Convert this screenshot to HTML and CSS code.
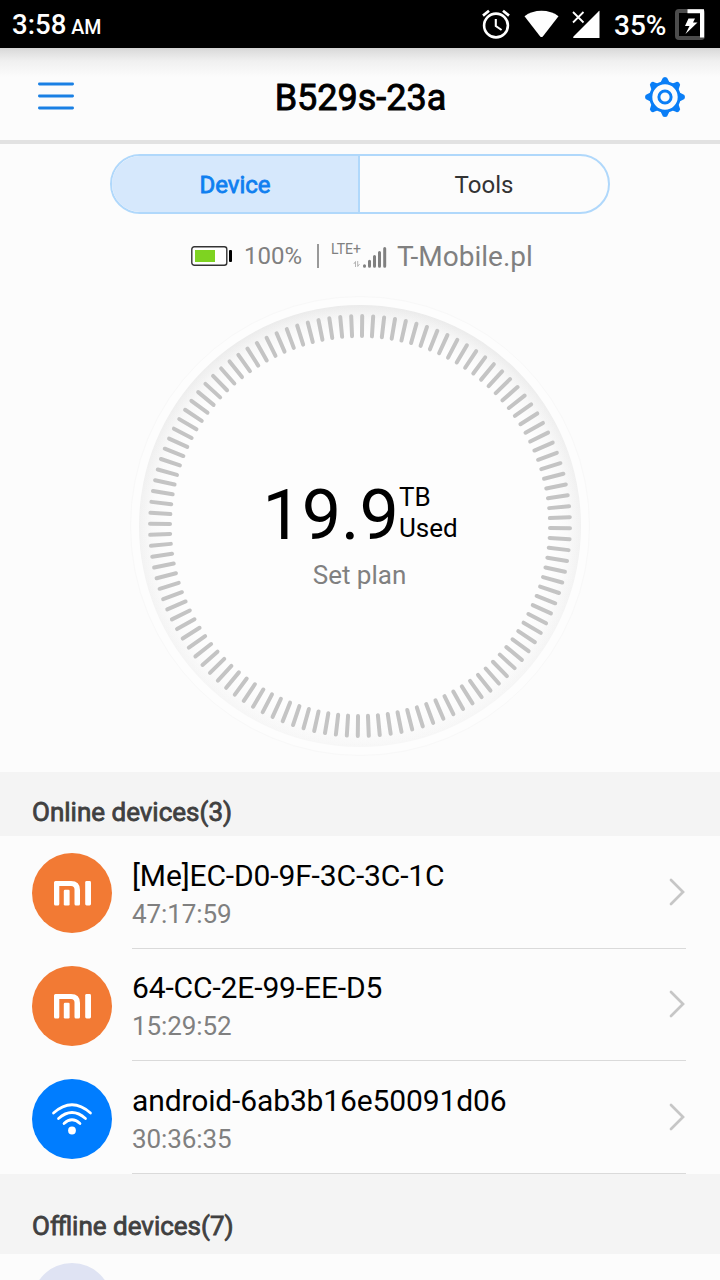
FILE: index.html
```html
<!DOCTYPE html>
<html lang="en">
<head>
<meta charset="utf-8">
<title>B529s-23a</title>
<link rel="stylesheet" href="styles.css">
</head>
<body>
<div class="screen">
  <div class="status">
    <div class="clock">3:58 <span class="ampm">AM</span></div>
    <div class="status-icons">
      <svg class="alarm" width="28" height="30" viewBox="0 0 28 30" fill="none" stroke="#fff">
        <circle cx="14" cy="16.5" r="11.9" stroke-width="2.6"/>
        <path d="M13.8 10v7l5.8 4" stroke-width="2.1"/>
        <path d="M1 6.6 7 1.7M27 6.6 21 1.7" stroke-width="2.7"/>
      </svg>
      <svg class="wifi" width="35" height="28" viewBox="0 0 35 28">
        <path d="M.5 6.2C5 2.6 11 .7 17.500.7S30 2.600 34.500 6.200L19 26.200Q17.500 28 16 26.200Z" fill="#fff"/>
      </svg>
      <svg class="cell" width="28" height="29" viewBox="0 0 28 29">
        <path d="M27.500 1V28H2Q.3 28 1.500 26.500L26 2Q27.500.4 27.500 1Z" fill="#fff"/>
        <path d="M0 0H13L14 10 6 18H0Z" fill="#000"/>
        <path d="M1 2 11.500 12.500M11.500 2 1 12.500" stroke="#fff" stroke-width="1.8"/>
      </svg>
      <span class="percent">35%</span>
      <svg class="charge" width="30" height="31" viewBox="0 0 30 31">
        <rect x="2" y="2" width="26" height="27" rx="2" fill="none" stroke="#4c4c4c" stroke-width="4"/>
        <path d="M12.500 2.300H27V28.500" fill="none" stroke="#fff" stroke-width="4"/>
        <path d="M13.500 9.500H20L18 13.500H22.500L10.500 25 14.500 17H10Z" fill="#fff"/>
      </svg>
    </div>
  </div>

  <header class="header">
    <svg class="menu" width="36" height="28" viewBox="0 0 36 28" stroke="#1a80e4" stroke-width="2.800" stroke-linecap="round">
      <path d="M1.400 2H34.600M1.400 14H34.600M1.400 26H34.600"/>
    </svg>
    <h1 class="title">B529s-23a</h1>
    <svg class="gear" width="40" height="40" viewBox="-20 -20 40 40">
      <g id="teeth" fill="#0a7ef6">
        <path id="tooth" d="M-5-13.500-3-17.500Q-2.600-20 0-20T3-17.500L5-13.500Z"/>
        <use href="#tooth" transform="rotate(45)"/>
        <use href="#tooth" transform="rotate(90)"/>
        <use href="#tooth" transform="rotate(135)"/>
        <use href="#tooth" transform="rotate(180)"/>
        <use href="#tooth" transform="rotate(225)"/>
        <use href="#tooth" transform="rotate(270)"/>
        <use href="#tooth" transform="rotate(315)"/>
      </g>
      <circle r="14.200" fill="#fcfcfc" stroke="#0a7ef6" stroke-width="3"/>
      <circle r="6.100" fill="none" stroke="#0a7ef6" stroke-width="3"/>
    </svg>
  </header>

  <main class="overview">
    <nav class="tabs">
      <div class="tab tab-active"><span class="device-label">Device</span></div>
      <div class="tab"><span class="tools-label">Tools</span></div>
    </nav>
    <div class="network">
      <svg class="battery" width="41" height="20" viewBox="0 0 41 20">
        <rect x=".8" y=".8" width="35" height="18.400" rx="2.500" fill="#fff" stroke="#333" stroke-width="1.400"/>
        <rect x="4" y="4" width="20" height="12" fill="#7ed321"/>
        <rect x="38" y="4" width="3" height="12" rx="1" fill="#000"/>
      </svg>
      <span class="level">100%</span>
      <span class="bar"></span>
      <div class="signal">
        <span class="lte">LTE+</span>
        <svg class="bars" width="34" height="21" viewBox="0 0 34 21">
          <path d="M2.500 20V14.500L.8 17M4.700 14V19.500L6.500 17" fill="none" stroke="#b5b5b5" stroke-width="1"/>
          <path d="M11.500 19.300V18.700M16.500 19.300V14.200M21.500 19.300V9.500M26.500 19.300V5.500M31.700 19.300V1.600" stroke="#808080" stroke-width="3" stroke-linecap="round"/>
        </svg>
      </div>
      <span class="carrier">T-Mobile.pl</span>
    </div>
    <div class="dial">
      <svg class="dial-face" width="462" height="462" viewBox="-231 -231 462 462">
        <defs>
          <linearGradient id="rim" x1="0" y1="0" x2="0" y2="1">
            <stop offset="0" stop-color="#ebebeb"/>
            <stop offset=".5" stop-color="#f2f2f2"/>
            <stop offset="1" stop-color="#f7f7f7"/>
          </linearGradient>
          <radialGradient id="face">
            <stop offset=".88" stop-color="#fdfdfd"/>
            <stop offset=".94" stop-color="#fdfdfd" stop-opacity=".7"/>
            <stop offset="1" stop-color="#fdfdfd" stop-opacity="0"/>
          </radialGradient>
        </defs>
        <circle r="229.500" fill="#fdfdfd" stroke="#f8f8f8"/>
        <circle r="221" fill="url(#rim)"/>
        <circle r="221" fill="url(#face)"/>
        <g id="ticks" stroke="#c4c4c4" stroke-width="4" stroke-linecap="round"></g>
      </svg>
      <div class="reading">
        <div class="usage">
          <span class="amount">19.9</span>
          <div class="unit"><span class="tb">TB</span><span class="used">Used</span></div>
        </div>
        <span class="plan">Set plan</span>
      </div>
    </div>
  </main>

  <h2 class="section online"><span>Online devices(3)</span></h2>
  <div class="device">
    <svg class="avatar" width="80" height="80" viewBox="0 0 80 80">
      <circle cx="40" cy="40" r="40" fill="#f27a34"/>
      <g id="mi" fill="#fff">
        <path d="M22 29.500Q22 28 23.500 28H39Q48 28 48 37V51Q48 52.500 46.500 52.500H44Q42.500 52.500 42.500 51V36.500Q42.500 33 39 33H27.300V51Q27.300 52.500 25.800 52.500H23.500Q22 52.500 22 51Z"/>
        <rect x="31.800" y="36.800" width="5.800" height="15.700" rx="1.200"/>
        <rect x="53.200" y="28" width="5.800" height="24.500" rx="1.400"/>
      </g>
    </svg>
    <div class="info">
      <div class="text"><span class="name">[Me]EC-D0-9F-3C-3C-1C</span><span class="time">47:17:59</span></div>
      <svg class="chevron" width="16" height="28" viewBox="0 0 16 28"><path d="M2 2 14 14 2 26" fill="none" stroke="#c6c6c6" stroke-width="2.700" stroke-linecap="round"/></svg>
    </div>
  </div>
  <div class="device">
    <svg class="avatar" width="80" height="80" viewBox="0 0 80 80">
      <circle cx="40" cy="40" r="40" fill="#f27a34"/>
      <use href="#mi"/>
    </svg>
    <div class="info">
      <div class="text"><span class="name">64-CC-2E-99-EE-D5</span><span class="time">15:29:52</span></div>
      <svg class="chevron" width="16" height="28" viewBox="0 0 16 28"><path d="M2 2 14 14 2 26" fill="none" stroke="#c6c6c6" stroke-width="2.700" stroke-linecap="round"/></svg>
    </div>
  </div>
  <div class="device">
    <svg class="avatar" width="80" height="80" viewBox="0 0 80 80">
      <circle cx="40" cy="40" r="40" fill="#007dff"/>
      <path d="M21.500 34Q40 17.500 58.500 34M26.500 39.500Q40 27.500 53.500 39.500M32 44.500Q40 37 48 44.500" fill="none" stroke="#fff" stroke-width="2.700" stroke-linecap="round"/>
      <circle cx="40" cy="51.500" r="3.900" fill="#fff"/>
    </svg>
    <div class="info">
      <div class="text"><span class="name">android-6ab3b16e50091d06</span><span class="time">30:36:35</span></div>
      <svg class="chevron" width="16" height="28" viewBox="0 0 16 28"><path d="M2 2 14 14 2 26" fill="none" stroke="#c6c6c6" stroke-width="2.700" stroke-linecap="round"/></svg>
    </div>
  </div>
  <h2 class="section offline"><span>Offline devices(7)</span></h2>
  <div class="device offline-device">
    <svg class="avatar" width="80" height="80" viewBox="0 0 80 80"><circle cx="40" cy="40" r="40" fill="#dfe3f3"/></svg>
  </div>
</div>
<script src="dial.js"></script>
</body>
</html>
```

FILE: styles.css
```css
* { box-sizing: border-box; }
body {
  margin: 0;
  background: #fcfcfc;
  font-family: Roboto, "Noto Sans", sans-serif;
  color: #000;
}
svg { display: block; flex: none; }
h1, h2 { margin: 0; font-weight: 400; }
span { white-space: nowrap; }
.screen { width: 720px; height: 1280px; overflow: hidden; }

.status {
  height: 48px;
  padding: 2px 15px 0 12px;
  display: flex;
  align-items: center;
  justify-content: space-between;
  background: #000;
  color: #fff;
}
.clock { font-size: 27.6px; font-weight: 500; line-height: 48px; padding-top: 3px; }
.ampm { font-size: 19.6px; margin-left: -2px; }
.status-icons { display: flex; align-items: center; height: 48px; }
.wifi { margin-left: 14px; }
.cell { margin-left: 13px; }
.percent { font-size: 28px; font-weight: 500; width: 53px; margin-left: 14px; }
.charge { margin-left: 8px; }
.alarm, .wifi, .cell, .charge { margin-top: -2px; }

.header {
  height: 96px;
  padding: 0 35px 0 38px;
  border-bottom: 4px solid #e2e2e2;
  background: linear-gradient(#d4d4d4 0, #dedede 3px, #f0f0f0 13px, #fcfcfc 29px);
  display: grid;
  grid-template-columns: 40px 1fr 40px;
  align-items: center;
}
.menu { margin-top: 4px; }
.gear { margin-top: 5px; }
.title {
  text-align: center;
  font-size: 36px;
  padding: 8px 2px 0 0;
  -webkit-text-stroke: .9px #000;
}

.overview { height: 628px; padding-top: 10px; display: flex; flex-direction: column; align-items: center; }
.tabs {
  width: 500px;
  height: 60px;
  display: flex;
  border: 2px solid #b0d8fb;
  border-radius: 30px;
  overflow: hidden;
  font-size: 24px;
}
.tab { flex: 1; display: flex; align-items: center; justify-content: center; color: #333; padding-top: 2px; }
.tab-active { flex: 0 0 248px; background: #d6e8fc; color: #0f7ff0; border-right: 2px solid #b0d8fb; -webkit-text-stroke: .8px #0f7ff0; }

.network { align-self: stretch; height: 82px; padding: 2px 0 0 191px; display: flex; align-items: center; color: #808080; font-size: 24px; }
.level { width: 59px; margin-left: 12px; }
.bar { width: 2px; height: 24px; margin-left: 14px; background: #999; }
.signal { width: 56px; height: 32px; margin-left: 12px; display: flex; flex-direction: column; align-items: flex-end; }
.lte { align-self: flex-start; font-size: 14px; line-height: 18px; height: 10px; }
.bars { margin-top: -3px; }
.carrier { font-size: 28px; margin-left: 10px; }

.dial { width: 462px; height: 462px; display: grid; margin-top: -1px; }
.dial-face, .reading { grid-area: 1 / 1; }
.reading { display: flex; flex-direction: column; align-items: center; padding-top: 177px; }
.usage { display: flex; }
.amount { font-size: 70px; line-height: 86px; height: 84px; }
.unit { display: flex; flex-direction: column; font-size: 26px; line-height: 31px; padding-top: 10px; }
.plan { font-size: 26px; line-height: 30px; color: #808080; margin: 4px 1px 0 0; }

.section { background: #f4f4f4; padding-left: 32px; font-size: 26px; color: #404040; -webkit-text-stroke: .8px #404040; line-height: 30px; }
.online { height: 64px; padding-top: 25px; }
.offline { height: 80px; padding-top: 37px; }

.device { height: 112.67px; padding: 0 34px 0 32px; display: flex; gap: 20px; align-items: center; }
.avatar { margin-top: 2px; }
.info { flex: 1; height: 100%; display: flex; justify-content: space-between; align-items: center; border-bottom: 1px solid #dadada; }
.text { display: flex; flex-direction: column; padding-top: 6px; }
.chevron { margin-right: 1px; }
.name { font-size: 30px; line-height: 38px; letter-spacing: -.13px; }
.time { font-size: 26px; line-height: 38px; color: #808080; letter-spacing: -.1px; }
.offline-device { align-items: flex-start; padding-top: 7px; }
```

FILE: dial.js
```js
const ticks = document.getElementById('ticks');
for (let i = 0; i < 120; i++) {
  const line = document.createElementNS('http://www.w3.org/2000/svg', 'line');
  line.setAttribute('y1', -210);
  line.setAttribute('y2', -190);
  line.setAttribute('transform', `rotate(${i * 3 + 0.6})`);
  ticks.appendChild(line);
}
```
